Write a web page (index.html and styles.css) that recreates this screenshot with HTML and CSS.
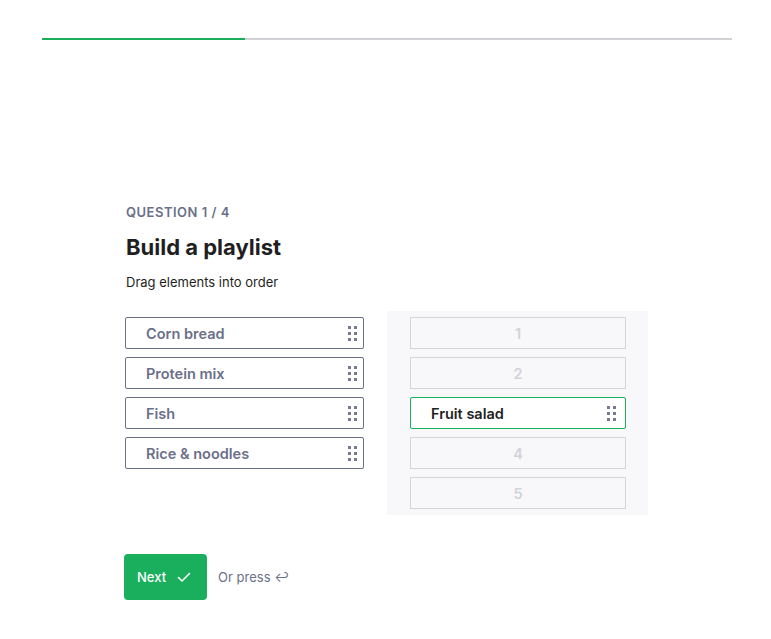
FILE: index.html
```html
<!DOCTYPE html>
<html lang="en">
<head>
    <meta charset="UTF-8">
    <meta name="viewport" content="width=device-width, initial-scale=1.0">
    <title>Build a playlist</title>
    <link rel="stylesheet" href="styles.css">
</head>
<body>
    <div class="progress">
        <div class="progress-fill"></div>
    </div>

    <div class="question">
        <p class="question-count">QUESTION 1 / 4</p>
        <h1>Build a playlist</h1>
        <p class="hint">Drag elements into order</p>

        <div class="board">
            <div class="options">
                <div class="item">Corn bread <svg class="grip" width="9" height="15" viewBox="0 0 9 15"><path d="M0 0h3v3H0zM6 0h3v3H6zM0 6h3v3H0zM6 6h3v3H6zM0 12h3v3H0zM6 12h3v3H6z"/></svg></div>
                <div class="item">Protein mix <svg class="grip" width="9" height="15" viewBox="0 0 9 15"><path d="M0 0h3v3H0zM6 0h3v3H6zM0 6h3v3H0zM6 6h3v3H6zM0 12h3v3H0zM6 12h3v3H6z"/></svg></div>
                <div class="item">Fish <svg class="grip" width="9" height="15" viewBox="0 0 9 15"><path d="M0 0h3v3H0zM6 0h3v3H6zM0 6h3v3H0zM6 6h3v3H6zM0 12h3v3H0zM6 12h3v3H6z"/></svg></div>
                <div class="item">Rice &amp; noodles <svg class="grip" width="9" height="15" viewBox="0 0 9 15"><path d="M0 0h3v3H0zM6 0h3v3H6zM0 6h3v3H0zM6 6h3v3H6zM0 12h3v3H0zM6 12h3v3H6z"/></svg></div>
            </div>

            <div class="slots">
                <div class="slot">1</div>
                <div class="slot">2</div>
                <div class="item placed">Fruit salad <svg class="grip" width="9" height="15" viewBox="0 0 9 15"><path d="M0 0h3v3H0zM6 0h3v3H6zM0 6h3v3H0zM6 6h3v3H6zM0 12h3v3H0zM6 12h3v3H6z"/></svg></div>
                <div class="slot">4</div>
                <div class="slot">5</div>
            </div>
        </div>

        <div class="actions">
            <button class="next-btn">Next
                <svg width="16" height="16" viewBox="0 0 16 16" fill="none">
                    <path d="M2.5 8.5l3.5 3.5 7.5-7.5" stroke="#fff" stroke-width="1.6" stroke-linecap="round" stroke-linejoin="round"/>
                </svg>
            </button>
            <span class="press">Or press &#8617;</span>
        </div>
    </div>
</body>
</html>
```

FILE: styles.css
```css
body {
    font-family: Inter, 'Noto Sans', sans-serif;
    background-color: #ffffff;
    margin: 0;
    padding: 0;
    color: #1f1f23;
}

.progress {
    margin: 38px 39px 0 42px;
    height: 2px;
    background-color: #d1d2d6;
}

.progress-fill {
    width: 29.4%;
    height: 100%;
    background-color: #1aaf5d;
}

.question {
    padding: 163px 0 0 125px;
}

.question-count {
    margin: 0 0 0 1px;
    font-size: 13px;
    font-weight: 600;
    letter-spacing: 0.5px;
    color: #6b7089;
    line-height: 18px;
}

h1 {
    margin: 12px 0 0 1px;
    font-size: 22px;
    font-weight: 700;
    line-height: 28px;
    color: #1f1f23;
}

.hint {
    margin: 12px 0 0 1px;
    font-size: 13px;
    line-height: 18px;
    color: #1f1f23;
}

.board {
    display: flex;
    gap: 23px;
    margin-top: 20px;
    align-items: flex-start;
}

.options {
    display: flex;
    flex-direction: column;
    gap: 8px;
    width: 239px;
    padding-top: 6px;
}

.item {
    box-sizing: border-box;
    height: 32px;
    border: 1px solid #6b7089;
    border-radius: 2px;
    display: flex;
    align-items: center;
    justify-content: space-between;
    padding: 0 6px 0 20px;
    font-size: 14.5px;
    font-weight: 600;
    color: #6b7089;
    background-color: #ffffff;
}

.grip {
    display: block;
    flex-shrink: 0;
    fill: #767b92;
}

.slots {
    display: flex;
    flex-direction: column;
    gap: 8px;
    width: 216px;
    padding: 6px 22px 6px 23px;
    background-color: #f8f8fa;
}

.slot {
    box-sizing: border-box;
    height: 32px;
    border: 1px solid #d4d5da;
    background-color: #f8f8fa;
    display: flex;
    align-items: center;
    justify-content: center;
    font-size: 14.5px;
    font-weight: 600;
    color: #d2d3d8;
}

.placed {
    border-color: #1aaf5d;
    color: #1f1f23;
    padding-right: 9px;
}

.actions {
    display: flex;
    align-items: center;
    gap: 11px;
    margin-top: 39px;
}

.next-btn {
    display: flex;
    align-items: center;
    gap: 10px;
    height: 46px;
    padding: 0 15px 0 13px;
    margin-left: -1px;
    border: none;
    border-radius: 4px;
    background-color: #1aaf5d;
    color: #ffffff;
    font-family: inherit;
    font-size: 13px;
    font-weight: 500;
    cursor: pointer;
}

.press {
    font-size: 13px;
    color: #6b7089;
}
```
